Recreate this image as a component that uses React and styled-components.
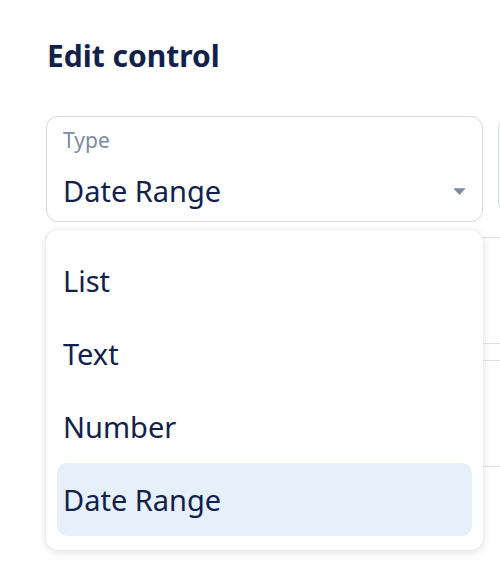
import React from "react";
import styled, { createGlobalStyle } from "styled-components";

const Global = createGlobalStyle`
  html, body { margin: 0; padding: 0; background: #ffffff; }
  body { font-family: "Noto Sans", "Open Sans", sans-serif; color: #12214a; overflow: hidden; }
  * { box-sizing: border-box; }
`;

const Page = styled.div`
  width: 500px;
  height: 580px;
  padding: 36px 0 0 46px;
  overflow: hidden;
`;

const Title = styled.h1`
  margin: 0 0 40px 1px;
  font-size: 30px;
  line-height: 40px;
  font-weight: 700;
  color: #12214a;
`;

const FieldRow = styled.div`
  display: flex;
  gap: 15px;
  align-items: flex-start;
`;

const SelectWrap = styled.div`
  position: relative;
  flex: 0 0 437px;
`;

const SelectBox = styled.div`
  height: 106px;
  border: 1px solid #d3d9e1;
  border-radius: 12px;
  padding: 9px 16px 0 16px;
  display: flex;
  flex-direction: column;
`;

const Label = styled.span`
  font-size: 21px;
  line-height: 28px;
  color: #7d8ba0;
`;

const ValueRow = styled.div`
  display: flex;
  align-items: center;
  justify-content: space-between;
  margin-top: 17px;
  height: 40px;
`;

const Value = styled.span`
  font-size: 29px;
  line-height: 40px;
  color: #12214a;
`;

const Caret = styled.svg`
  width: 13px;
  height: 7px;
  fill: #7d8ba0;
`;

const OtherField = styled.div`
  flex: 0 0 200px;
  height: 98px;
  border: 1px solid #d3d9e1;
  border-radius: 12px;
`;

const Table = styled.div`
  margin-top: 15px;
  display: flex;
  flex-direction: column;
`;

const TableLine = styled.div`
  height: ${(p) => p.$h}px;
  border-top: 1px solid #dde2e9;
`;

const Menu = styled.ul`
  position: absolute;
  top: 114px;
  left: 0;
  right: 0;
  margin: 0;
  padding: 14px 11px;
  list-style: none;
  background: #ffffff;
  border-radius: 12px;
  box-shadow: 0 2px 8px rgba(20, 33, 61, 0.14), 0 0 1px rgba(20, 33, 61, 0.12);
  z-index: 2;
`;

const Item = styled.li`
  height: 73px;
  display: flex;
  align-items: center;
  padding-left: 6px;
  border-radius: 10px;
  font-size: 29px;
  color: #12214a;
  background: ${(p) => (p.$selected ? "#e6f0fb" : "transparent")};
`;

const options = ["List", "Text", "Number", "Date Range"];

export default function App() {
  const selected = "Date Range";
  return (
    <>
      <Global />
      <Page>
        <Title>Edit control</Title>
        <FieldRow>
          <SelectWrap>
            <SelectBox>
              <Label>Type</Label>
              <ValueRow>
                <Value>{selected}</Value>
                <Caret viewBox="0 0 13 7">
                  <path d="M0.3 0.3 H12.7 L7.2 6.3 Q6.5 7 5.8 6.3 Z" />
                </Caret>
              </ValueRow>
            </SelectBox>
            <Menu>
              {options.map((o) => (
                <Item key={o} $selected={o === selected}>
                  {o}
                </Item>
              ))}
            </Menu>
          </SelectWrap>
          <OtherField />
        </FieldRow>
        <Table>
          <TableLine $h={106} />
          <TableLine $h={17} />
          <TableLine $h={106} />
          <TableLine $h={60} />
        </Table>
      </Page>
    </>
  );
}
